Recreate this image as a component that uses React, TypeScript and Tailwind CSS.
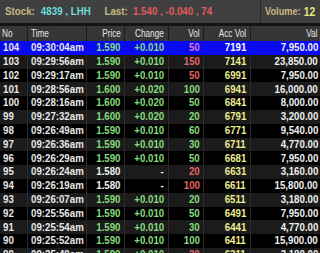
type Trade = {
  no: number;
  time: string;
  price: string;
  change: string;
  vol: number;
  side: 'up' | 'down';
  acc: number;
  val: string;
};

const trades: Trade[] = [
  { no: 104, time: '09:30:04am', price: '1.590', change: '+0.010', vol: 50, side: 'up', acc: 7191, val: '7,950.00' },
  { no: 103, time: '09:29:56am', price: '1.590', change: '+0.010', vol: 150, side: 'down', acc: 7141, val: '23,850.00' },
  { no: 102, time: '09:29:17am', price: '1.590', change: '+0.010', vol: 50, side: 'down', acc: 6991, val: '7,950.00' },
  { no: 101, time: '09:28:56am', price: '1.600', change: '+0.020', vol: 100, side: 'up', acc: 6941, val: '16,000.00' },
  { no: 100, time: '09:28:16am', price: '1.600', change: '+0.020', vol: 50, side: 'up', acc: 6841, val: '8,000.00' },
  { no: 99, time: '09:27:32am', price: '1.600', change: '+0.020', vol: 20, side: 'up', acc: 6791, val: '3,200.00' },
  { no: 98, time: '09:26:49am', price: '1.590', change: '+0.010', vol: 60, side: 'up', acc: 6771, val: '9,540.00' },
  { no: 97, time: '09:26:36am', price: '1.590', change: '+0.010', vol: 30, side: 'up', acc: 6711, val: '4,770.00' },
  { no: 96, time: '09:26:29am', price: '1.590', change: '+0.010', vol: 50, side: 'up', acc: 6681, val: '7,950.00' },
  { no: 95, time: '09:26:24am', price: '1.580', change: '-', vol: 20, side: 'down', acc: 6631, val: '3,160.00' },
  { no: 94, time: '09:26:19am', price: '1.580', change: '-', vol: 100, side: 'down', acc: 6611, val: '15,800.00' },
  { no: 93, time: '09:26:07am', price: '1.590', change: '+0.010', vol: 20, side: 'up', acc: 6511, val: '3,180.00' },
  { no: 92, time: '09:25:56am', price: '1.590', change: '+0.010', vol: 50, side: 'up', acc: 6491, val: '7,950.00' },
  { no: 91, time: '09:25:54am', price: '1.590', change: '+0.010', vol: 30, side: 'up', acc: 6441, val: '4,770.00' },
  { no: 90, time: '09:25:52am', price: '1.590', change: '+0.010', vol: 100, side: 'up', acc: 6411, val: '15,900.00' },
  { no: 89, time: '09:25:49am', price: '1.590', change: '+0.010', vol: 20, side: 'down', acc: 6311, val: '3,180.00' },
];

const cols = 'grid grid-cols-[28px_59px_38px_44px_35px_47px_69px]';
const font = { fontFamily: '"Liberation Sans", Arial, sans-serif' };

// the terminal font is a narrow one, squeeze Arial to match
function L({ children }: { children: React.ReactNode }) {
  return <span className="inline-block whitespace-nowrap origin-left scale-x-[0.85]">{children}</span>;
}
function R({ children }: { children: React.ReactNode }) {
  return <span className="inline-block whitespace-nowrap origin-right scale-x-[0.85]">{children}</span>;
}
function H({ children }: { children: React.ReactNode }) {
  return <span className="inline-block whitespace-nowrap origin-right scale-x-[0.78]">{children}</span>;
}

function Row({ t, i }: { t: Trade; i: number }) {
  const selected = i === 0;
  const flat = t.change === '-';
  const bg = selected ? 'bg-[#0a0af0]' : i % 2 === 1 ? 'bg-[#1b1b1b]' : 'bg-black';
  const sep = selected ? 'border-[#0a0af0]' : 'border-[#2c2c2c]';
  const green = 'text-[#86dc7c]';
  return (
    <div className={`${cols} h-[13.8px] text-[11.4px] font-bold leading-none ${bg}`}>
      <div className={`pl-[3px] text-[#e8e8e8] border-r ${sep} flex items-center`}>
        <L>{t.no}</L>
      </div>
      <div className={`pl-[3px] text-[#e8e8e8] border-r ${sep} flex items-center`}>
        <L>{t.time}</L>
      </div>
      <div className={`pr-[3px] flex items-center justify-end border-r ${sep} ${flat ? 'text-[#f0f0f0]' : green}`}>
        <R>{t.price}</R>
      </div>
      <div className={`pr-[4px] flex items-center justify-end border-r ${sep} ${flat ? 'text-[#f0f0f0]' : green}`}>
        <R>{t.change}</R>
      </div>
      <div
        className={`pr-[3px] flex items-center justify-end border-r ${sep} ${
          selected ? 'text-[#d878d8]' : t.side === 'up' ? green : 'text-[#e06464]'
        }`}
      >
        <R>{t.vol}</R>
      </div>
      <div className={`pr-[4px] flex items-center justify-end border-r ${sep} ${selected ? 'text-white' : 'text-[#ecec90]'}`}>
        <R>{t.acc}</R>
      </div>
      <div className="pr-[2px] flex items-center justify-end text-[#eeeeee]">
        <R>{t.val}</R>
      </div>
    </div>
  );
}

export default function App() {
  return (
    <div className="w-[320px] h-[253px] overflow-hidden bg-black" style={font}>
      {/* summary bar */}
      <div className="h-[23px] bg-[#404040] flex text-[11.5px] font-bold whitespace-nowrap overflow-hidden">
        <div className="w-[260px] shrink-0 flex items-center pl-[5px]">
          <div className="flex items-center origin-left scale-x-[0.85]">
            <span className="text-[#c9b883]">Stock:</span>
            <span className="pl-[7px] text-[#6cdcdc]">4839 , LHH</span>
            <span className="pl-[16px] text-[#c9b883]">Last:</span>
            <span className="pl-[6px] text-[#e05a5a]">1.540 , -0.040 , 74</span>
          </div>
        </div>
        <div className="shrink-0 border-l border-[#2a2a2a] flex items-center pl-[4px]">
          <div className="flex items-center origin-left scale-x-[0.8]">
            <span className="text-[#c9b883]">Volume:</span>
            <span className="pl-[4px] text-[#e4e480] text-[13px]">12</span>
          </div>
        </div>
      </div>
      <div className="h-[3px] bg-[#141414]" />
      {/* column header */}
      <div className={`${cols} h-[15px] bg-[#363636] text-[10.5px] text-[#e6e6e6] leading-none`}>
        <div className="pl-[2px] flex items-center border-r border-[#1c1c1c]">
          <span className="inline-block origin-left scale-x-[0.78]">No</span>
        </div>
        <div className="pl-[3px] flex items-center border-r border-[#1c1c1c]">
          <span className="inline-block origin-left scale-x-[0.78]">Time</span>
        </div>
        <div className="pr-[3px] flex items-center justify-end border-r border-[#1c1c1c]">
          <H>Price</H>
        </div>
        <div className="pr-[4px] flex items-center justify-end border-r border-[#1c1c1c]">
          <H>Change</H>
        </div>
        <div className="pr-[3px] flex items-center justify-end border-r border-[#1c1c1c]">
          <H>Vol</H>
        </div>
        <div className="pr-[4px] flex items-center justify-end border-r border-[#1c1c1c]">
          <H>Acc Vol</H>
        </div>
        <div className="pr-[3px] flex items-center justify-end">
          <H>Val</H>
        </div>
      </div>
      {trades.map((t, i) => (
        <Row key={t.no} t={t} i={i} />
      ))}
    </div>
  );
}
